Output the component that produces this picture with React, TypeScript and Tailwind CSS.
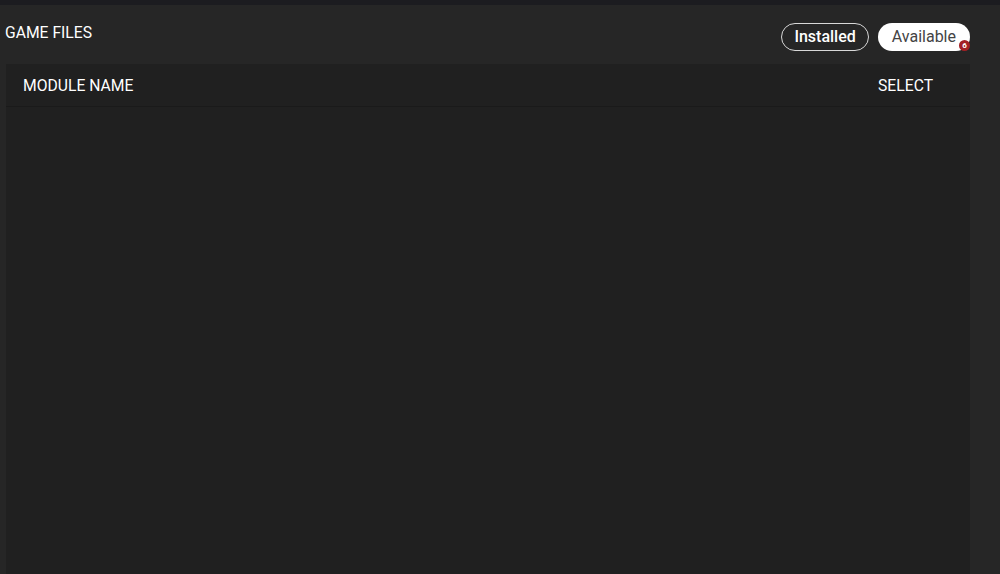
import React from 'react'

export default function App() {
  return (
    <div className="flex h-[574px] w-[1000px] flex-col overflow-hidden bg-[#262626] font-['Roboto',sans-serif] text-white">
      <div className="h-[5px] shrink-0 bg-[#1c1c20]" />
      <div className="flex items-start justify-between pl-[5px] pr-[30px] pt-[18px]">
        <h1 className="mt-[1px] text-[15.7px] leading-[18px]">GAME FILES</h1>
        <div className="flex items-center gap-[9px]">
          <button className="h-[28px] rounded-full border border-[#d8d8d8] px-[12px] text-[16px] font-medium leading-none text-white">
            Installed
          </button>
          <div className="relative">
            <button className="h-[28px] rounded-full bg-white px-[14px] text-[16px] leading-none text-[#444]">
              Available
            </button>
            <span className="absolute right-[0px] top-[17px] flex h-[11px] w-[11px] items-center justify-center rounded-full bg-[#a31f24] text-[8px] font-bold leading-none text-white">
              6
            </span>
          </div>
        </div>
      </div>
      <div className="ml-[6px] mr-[30px] mt-[13px] flex flex-1 flex-col bg-[#202020]">
        <div className="flex h-[43px] items-center justify-between border-b border-[#1a1a1a] pl-[17px] pr-[37px] pt-[2px] text-[15.7px]">
          <span>MODULE NAME</span>
          <span>SELECT</span>
        </div>
      </div>
    </div>
  )
}
